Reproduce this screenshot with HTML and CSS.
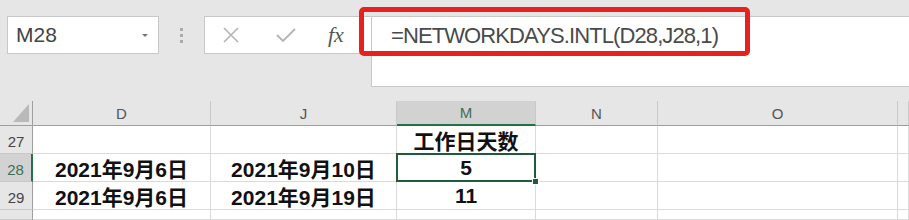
FILE: index.html
```html
<!DOCTYPE html>
<html lang="zh-CN">
<head>
  <meta charset="UTF-8" />
  <title>NETWORKDAYS.INTL</title>
  <link rel="stylesheet" href="styles.css">
</head>
<body>

  <div class="toolbar">
    <div class="namebox">
      <span class="name">M28</span>
      <span class="caret"></span>
    </div>
    <div class="grip"><i></i><i></i><i></i></div>
    <div class="fxbox">
      <svg class="ico" width="18" height="18" viewBox="0 0 18 18">
        <path d="M2 2 L16 16 M16 2 L2 16" stroke="#b4b4b4" stroke-width="1.6" fill="none"/>
      </svg>
      <svg class="ico" width="20" height="16" viewBox="0 0 20 16">
        <path d="M1 8 L7 14 L19 2" stroke="#b4b4b4" stroke-width="1.8" fill="none"/>
      </svg>
      <span class="fx">fx</span>
    </div>
    <div class="formula">=NETWORKDAYS.INTL(D28,J28,1)</div>
    <div class="mark"></div>
  </div>

  <div class="sheet">
    <div class="hd corner"><span class="tri"></span></div>
    <div class="hd col">D</div>
    <div class="hd col">J</div>
    <div class="hd col on">M</div>
    <div class="hd col">N</div>
    <div class="hd col">O</div>
    <div class="hd col"></div>

    <div class="hd row">27</div>
    <div class="c"></div>
    <div class="c"></div>
    <div class="c">工作日天数</div>
    <div class="c"></div>
    <div class="c"></div>
    <div class="c"></div>

    <div class="hd row on">28</div>
    <div class="c">2021年9月6日</div>
    <div class="c">2021年9月10日</div>
    <div class="c sel">5<span class="handle"></span></div>
    <div class="c"></div>
    <div class="c"></div>
    <div class="c"></div>

    <div class="hd row">29</div>
    <div class="c">2021年9月6日</div>
    <div class="c">2021年9月19日</div>
    <div class="c">11</div>
    <div class="c"></div>
    <div class="c"></div>
    <div class="c"></div>

    <div class="hd row last"></div>
    <div class="c"></div>
    <div class="c"></div>
    <div class="c"></div>
    <div class="c"></div>
    <div class="c"></div>
    <div class="c"></div>
  </div>

</body>
</html>
```

FILE: styles.css
```css
* {
  box-sizing: border-box;
}
body {
  margin: 0;
  width: 909px;
  height: 220px;
  overflow: hidden;
  background: #e6e6e6;
  font-family: "Liberation Sans", "Noto Sans CJK SC", sans-serif;
}

/* formula toolbar */
.toolbar {
  position: relative;
  height: 101px;
  padding: 16px 0 0 7px;
  display: flex;
  align-items: flex-start;
}
.namebox {
  width: 152px;
  height: 38px;
  background: #fff;
  border: 1px solid #c8c8c8;
  display: flex;
  align-items: center;
  justify-content: space-between;
  padding: 0 10px 0 8px;
}
.name {
  font-size: 21px;
  color: #444;
}
.caret {
  width: 0;
  height: 0;
  border-left: 3px solid transparent;
  border-right: 3px solid transparent;
  border-top: 3px solid #777;
}
.grip {
  width: 45px;
  height: 38px;
  display: flex;
  flex-direction: column;
  align-items: center;
  justify-content: center;
  gap: 3px;
}
.grip i {
  width: 3px;
  height: 3px;
  background: #ababab;
}
.fxbox {
  width: 167px;
  height: 38px;
  background: #fff;
  border: 1px solid #c8c8c8;
  border-right: none;
  display: flex;
  align-items: center;
  padding-left: 17px;
  gap: 36px;
}
.fx {
  font-family: "Liberation Serif", serif;
  font-style: italic;
  font-size: 22px;
  color: #555;
  margin-left: -4px;
}
.formula {
  flex: 1;
  height: 71px;
  background: #fff;
  border: 1px solid #c8c8c8;
  border-right: none;
  padding: 6px 0 0 19px;
  font-size: 22px;
  letter-spacing: -0.9px;
  color: #4a4a4a;
}
.mark {
  position: absolute;
  left: 359px;
  top: 7px;
  width: 391px;
  height: 49px;
  border: 5px solid #e8201e;
  border-radius: 5px;
}

/* sheet grid */
.sheet {
  display: grid;
  grid-template-columns: 33px 178px 186px 139px 122px 240px 11px;
  grid-template-rows: 25px 28px 28px 28px 10px;
  background: #fff;
}
.hd {
  background: #e6e6e6;
  color: #555;
  font-size: 15px;
  display: flex;
  align-items: center;
  justify-content: center;
}
.col {
  border-right: 1px solid #c9c9c9;
  border-bottom: 1px solid #9e9e9e;
}
.row {
  border-right: 1px solid #9e9e9e;
  border-bottom: 1px solid #c9c9c9;
  color: #444;
  padding-top: 3px;
}
.corner {
  border-right: 1px solid #9e9e9e;
  border-bottom: 1px solid #9e9e9e;
  position: relative;
}
.tri {
  position: absolute;
  right: 3px;
  bottom: 3px;
  width: 0;
  height: 0;
  border-left: 16px solid transparent;
  border-bottom: 18px solid #b9b9b9;
}
.col.on {
  background: #d2d2d2;
  color: #3e6f52;
  border-bottom: 2px solid #217346;
}
.row.on {
  background: #d2d2d2;
  color: #3e6f52;
  border-right: 2px solid #217346;
}
.c {
  background: #fff;
  border-right: 1px solid #dadada;
  border-bottom: 1px solid #dadada;
  display: flex;
  align-items: center;
  justify-content: center;
  font-size: 21px;
  font-weight: bold;
  color: #111;
}
.sel {
  position: relative;
  border: 2px solid #1f5c3c;
  margin: -1px 0 0 -1px;
}
.handle {
  position: absolute;
  right: -5px;
  bottom: -5px;
  width: 7px;
  height: 7px;
  background: #1f5c3c;
  border: 1px solid #fff;
}
```
